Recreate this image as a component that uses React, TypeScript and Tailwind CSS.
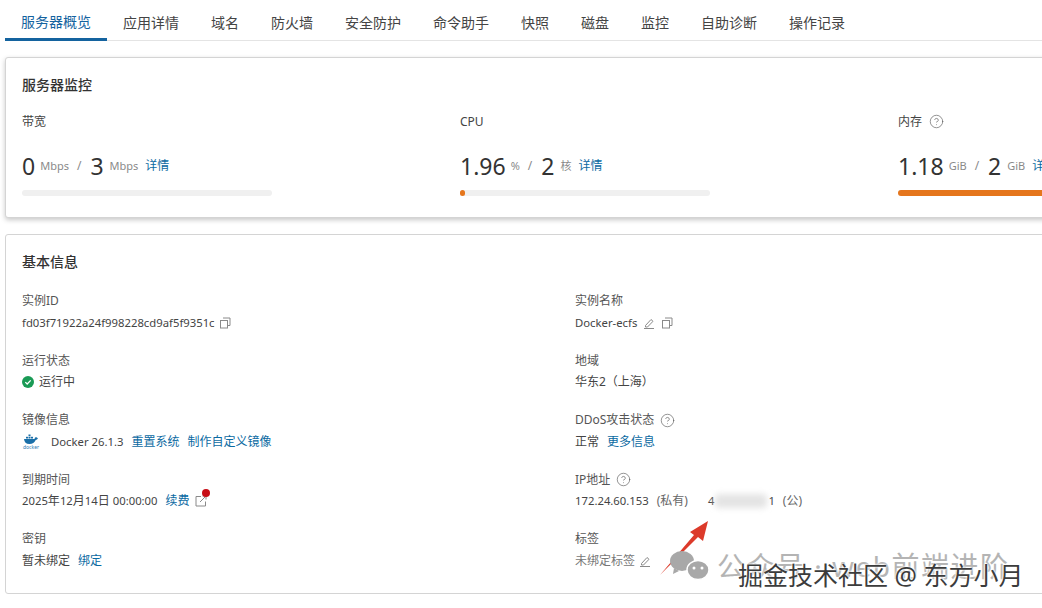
import { CircleHelp } from "lucide-react"

const tabs = ["服务器概览", "应用详情", "域名", "防火墙", "安全防护", "命令助手", "快照", "磁盘", "监控", "自助诊断", "操作记录"]

function CopyIcon() {
  return (
    <svg width="12" height="12" viewBox="0 0 12 12" fill="none" stroke="#8a8a8a" strokeWidth="1" className="shrink-0">
      <rect x="1.5" y="3.5" width="7" height="7.5" />
      <path d="M4 1h7v7.5H9" />
    </svg>
  )
}

function PencilIcon() {
  return (
    <svg width="12" height="12" viewBox="0 0 12 12" fill="none" stroke="#8a8a8a" strokeWidth="1" className="shrink-0">
      <path d="M2.5 8.5 8 2.5l2 1.8-5.5 5.7H2.5z" />
      <path d="M1 11.5h10" />
    </svg>
  )
}

function HelpIcon() {
  return <CircleHelp size={15} strokeWidth={1} className="shrink-0 text-[#555]" />
}

function CheckIcon() {
  return (
    <svg width="12" height="12" viewBox="0 0 12 12" className="shrink-0">
      <circle cx="6" cy="6" r="6" fill="#1a9a55" />
      <path d="M3.3 6.1 5.2 8l3.5-3.6" fill="none" stroke="#fff" strokeWidth="1.3" />
    </svg>
  )
}

function DockerLogo() {
  return (
    <span className="flex w-[18px] shrink-0 flex-col items-center">
      <svg width="16" height="10" viewBox="0 0 16 10">
        <path d="M1 5h10.5c.4-1.2 1-1.8 1.7-1.9.3.7.9 1 1.8 1-.5 1.300-1.300 1.900-2.300 2C11.500 8.800 9.500 10 6.500 10 3 10 1.300 8 1 5z" fill="#1a6fa8" />
        <rect x="3" y="2.800" width="2" height="1.700" fill="#1a6fa8" />
        <rect x="5.500" y="2.800" width="2" height="1.700" fill="#1a6fa8" />
        <rect x="8" y="2.800" width="2" height="1.700" fill="#1a6fa8" />
        <rect x="5.500" y="0.500" width="2" height="1.700" fill="#1a6fa8" />
      </svg>
      <span className="text-[5px] leading-[6px] text-[#2b7cb3]">docker</span>
    </span>
  )
}

function Link({ children }: { children: React.ReactNode }) {
  return <span className="text-[#0b6aa2]">{children}</span>
}

// 英数字は少し小さめ
function Num({ children }: { children: React.ReactNode }) {
  return <span className="text-[11.3px]">{children}</span>
}

function Metric({
  label,
  help,
  used,
  usedUnit,
  total,
  totalUnit,
  fill,
}: {
  label: string
  help?: boolean
  used: string
  usedUnit: string
  total: string
  totalUnit: string
  fill: number
}) {
  return (
    <div className="w-[250px] shrink-0">
      <div className="flex h-[18px] items-center gap-[7px] pt-[1px] text-xs text-[#444]">
        {label}
        {help && <HelpIcon />}
      </div>
      <div className="mt-[19px] flex h-[34px] items-center whitespace-nowrap">
        <span className="text-[23px] text-[#333]">{used}</span>
        <span className="ml-[5px] text-[11px] text-[#8a8a8a]">{usedUnit}</span>
        <span className="ml-[8px] mr-[9px] text-xs text-[#8a8a8a]">/</span>
        <span className="text-[23px] text-[#333]">{total}</span>
        <span className="ml-[6px] text-[11px] text-[#8a8a8a]">{totalUnit}</span>
        <span className="ml-[7px] text-xs">
          <Link>详情</Link>
        </span>
      </div>
      <div className="mt-[7px] h-[6px] rounded-full bg-[#f0f0f0]">
        {fill > 0 && <div className="h-full min-w-[5px] rounded-full bg-[#e5761d]" style={{ width: `${fill}%` }} />}
      </div>
    </div>
  )
}

function Field({ label, help, children }: { label: string; help?: boolean; children: React.ReactNode }) {
  return (
    <div className="h-[59.500px]">
      <div className="flex h-[18px] items-center gap-[6px] text-xs text-[#555]">
        {label}
        {help && <HelpIcon />}
      </div>
      <div className="mt-[3.500px] flex h-[18px] items-center whitespace-nowrap text-xs text-[#444]">{children}</div>
    </div>
  )
}

export default function App() {
  return (
    <div
      className="relative h-[608px] w-[1042px] overflow-hidden bg-white"
      style={{ fontFamily: '"Noto Sans", "Noto Sans CJK SC", sans-serif' }}
    >
      {/* タブ */}
      <div className="ml-[5px] flex h-[41px] border-b border-[#e4e4e4]">
        {tabs.map((t, i) => (
          <div
            key={t}
            className={
              i === 0
                ? "-mb-px flex h-[41px] items-center border-b-[3px] border-[#14639f] px-4 pt-[6px] text-sm text-[#14639f]"
                : "flex h-[40px] items-center px-4 pt-[5px] text-sm text-[#444]"
            }
          >
            {t}
          </div>
        ))}
      </div>

      {/* サーバー監視 */}
      <div className="ml-[5px] mt-4 h-[161px] w-[1060px] rounded-[3px] border border-[#d4d4d4] bg-white px-4 shadow-[0_2px_5px_rgba(0,0,0,0.22)]">
        <div className="mt-[17px] h-5 text-sm leading-5 font-medium text-[#333]">服务器监控</div>
        <div className="mt-[17px] flex gap-[188px]">
          <Metric label="带宽" used="0" usedUnit="Mbps" total="3" totalUnit="Mbps" fill={0} />
          <Metric label="CPU" used="1.96" usedUnit="%" total="2" totalUnit="核" fill={2} />
          <Metric label="内存" help used="1.18" usedUnit="GiB" total="2" totalUnit="GiB" fill={100} />
        </div>
      </div>

      {/* 基本情報 */}
      <div className="ml-[5px] mt-4 h-[360px] w-[1060px] rounded-[3px] border border-[#d4d4d4] bg-white px-4">
        <div className="mt-[17px] h-5 text-sm leading-5 font-medium text-[#333]">基本信息</div>
        <div className="mt-5 grid grid-cols-[553px_1fr]">
          <Field label="实例ID">
            <Num>fd03f71922a24f998228cd9af5f9351c</Num>
            <span className="ml-1">
              <CopyIcon />
            </span>
          </Field>
          <Field label="实例名称">
            <Num>Docker-ecfs</Num>
            <span className="ml-[6px] flex gap-[6px]">
              <PencilIcon />
              <CopyIcon />
            </span>
          </Field>
          <Field label="运行状态">
            <CheckIcon />
            <span className="ml-[5px]">运行中</span>
          </Field>
          <Field label="地域">华东2（上海）</Field>
          <Field label="镜像信息">
            <DockerLogo />
            <span className="ml-[11px]">
              <Num>Docker 26.1.3</Num>
            </span>
            <span className="ml-2">
              <Link>重置系统</Link>
            </span>
            <span className="ml-2">
              <Link>制作自定义镜像</Link>
            </span>
          </Field>
          <Field label="DDoS攻击状态" help>
            正常
            <span className="ml-2">
              <Link>更多信息</Link>
            </span>
          </Field>
          <Field label="到期时间">
            <Num>2025</Num>年<Num>12</Num>月<Num>14</Num>日<Num>&nbsp;00:00:00</Num>
            <span className="ml-2">
              <Link>续费</Link>
            </span>
            <span className="relative ml-[5px]">
              <svg width="12" height="12" viewBox="0 0 12 12" fill="none" stroke="#8a8a8a" strokeWidth="1">
                <path d="M6 1.500H1v9.500h9.500V6.500" />
                <path d="M5 7l5.500-5.500M7.500 1h3.500v3.500" />
              </svg>
              <span className="absolute -top-[6px] left-[7px] h-2 w-2 rounded-full bg-[#c70d16]" />
            </span>
          </Field>
          <Field label="IP地址" help>
            <Num>172.24.60.153</Num>
            <span className="ml-2 text-[#666]">(私有)</span>
            <span className="ml-[20px]">
              <Num>4</Num>
            </span>
            <span className="mx-[1px] h-[14px] w-[52px] rounded-sm bg-[#e4e4e4] blur-[3px]" />
            <Num>1</Num>
            <span className="ml-2 text-[#666]">(公)</span>
          </Field>
          <Field label="密钥">
            暂未绑定
            <span className="ml-2">
              <Link>绑定</Link>
            </span>
          </Field>
          <Field label="标签">
            <span className="text-[#777]">未绑定标签</span>
            <span className="ml-[4px]">
              <PencilIcon />
            </span>
          </Field>
        </div>
      </div>

      {/* 赤い矢印 */}
      <svg className="pointer-events-none absolute left-[655px] top-[515px]" width="60" height="65" viewBox="0 0 60 65">
        <path d="M5 60 39 20l-4-3 18-11-5 20-5-4z" fill="#dc3a2a" />
      </svg>

      {/* 透かし */}
      <svg className="pointer-events-none absolute left-[670px] top-[551px]" width="40" height="32" viewBox="0 0 40 32">
        <ellipse cx="12" cy="10" rx="12" ry="10" fill="#a8a8a8" />
        <path d="M4 17l-1 6 6-3z" fill="#a8a8a8" />
        <ellipse cx="28" cy="19" rx="11" ry="9.500" fill="#a8a8a8" stroke="#fff" strokeWidth="1.500" />
        <circle cx="24" cy="17" r="1.500" fill="#fff" />
        <circle cx="32" cy="17" r="1.500" fill="#fff" />
      </svg>
      <div className="pointer-events-none absolute left-[717px] top-[548px] whitespace-nowrap text-[28px] leading-[36px] tracking-[1.5px] text-[#b4b4b4]">
        公众号 · web前端进阶
      </div>
      <div className="pointer-events-none absolute left-[738px] top-[557px] whitespace-nowrap text-[25px] leading-[36px] text-[#3c3c3c] [text-shadow:0_0_2px_#fff,0_0_2px_#fff,0_0_3px_#fff]">
        掘金技术社区 @ 东方小月
      </div>
    </div>
  )
}
